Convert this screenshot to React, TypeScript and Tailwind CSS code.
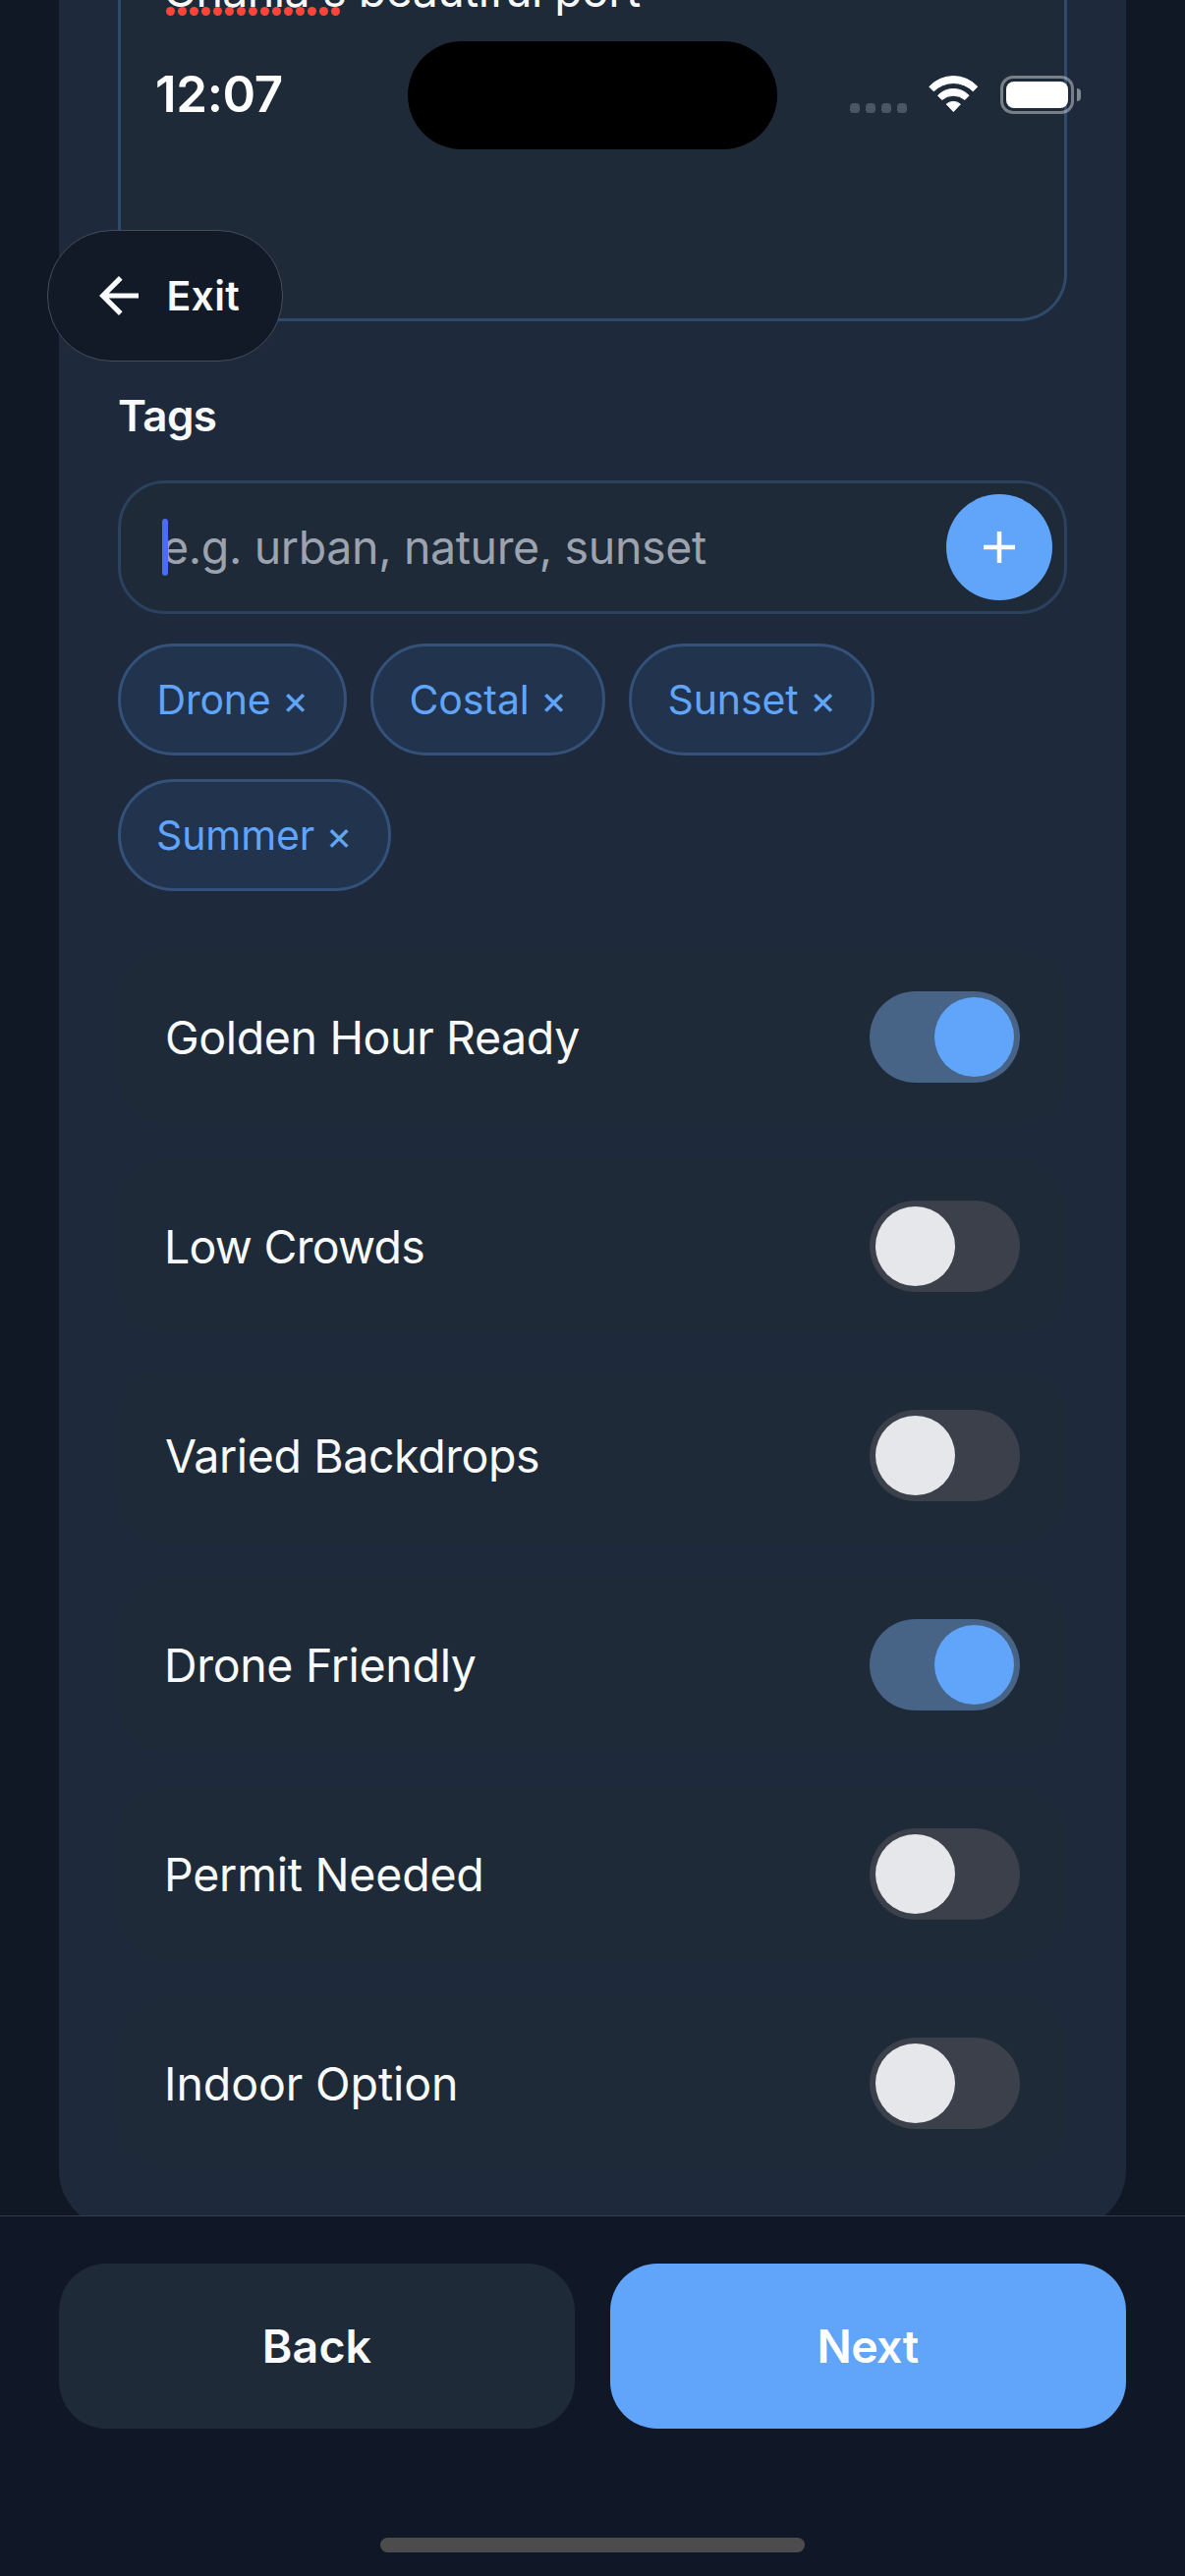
const tags = [
  { label: "Drone", className: "w-[232.5px] pl-[36.5px] tracking-[-0.2px]" },
  { label: "Costal", className: "w-[239px] pl-[37px] tracking-[-0.1px]" },
  { label: "Sunset", className: "w-[250px] pl-[37px] tracking-[-0.1px]" },
  { label: "Summer", className: "w-[278px] pl-[36px] tracking-[-0.1px]" },
];

const options = [
  { label: "Golden Hour Ready", on: true, className: "tracking-[-0.37px]" },
  { label: "Low Crowds", on: false, className: "-ml-px tracking-[-0.75px]" },
  { label: "Varied Backdrops", on: false, className: "tracking-[-0.4px]" },
  { label: "Drone Friendly", on: true, className: "-ml-px tracking-[-0.32px]" },
  { label: "Permit Needed", on: false, className: "-ml-px tracking-[-0.22px]" },
  { label: "Indoor Option", on: false, className: "-ml-px tracking-[-0.1px]" },
];

function Toggle({ on }: { on: boolean }) {
  return (
    <div
      className={`flex h-[93px] w-[153px] items-center rounded-full px-[6px] ${
        on ? "justify-end bg-[#476386]" : "justify-start bg-[#3b404a]"
      }`}
    >
      <div className={`size-[81px] rounded-full ${on ? "bg-[#60a5fa]" : "bg-[#e5e7eb]"}`} />
    </div>
  );
}

function StatusBar() {
  return (
    <div className="absolute inset-x-0 top-0 h-[192px]">
      <div className="flex h-full items-center justify-between pr-[106px] pl-[158px]">
        <span className="text-[51px] leading-[60px] font-semibold tracking-[-0.35px] text-white">12:07</span>
        <div className="flex h-[39px] items-center">
          <div className="mt-[27px] flex gap-[6px]">
            {[0, 1, 2, 3].map((i) => (
              <span key={i} className="size-[10px] rounded-[3.5px] bg-[#4b5663]" />
            ))}
          </div>
          <svg className="ml-[22px] h-[38px] w-[51px]" viewBox="0 0 51 38" fill="#fff" stroke="#fff" strokeWidth="1" strokeLinejoin="round">
            <path d="M.8 11.3A33.3 33.3 0 0 1 49.8 11.3L45.3 15.8A28.3 28.3 0 0 0 5.3 15.8Z" />
            <path d="M9.5 20.2A21.8 21.8 0 0 1 41.1 20.2L36.9 24.5A17.8 17.8 0 0 0 13.7 24.5Z" />
            <path d="M18.2 29A11 11 0 0 1 32.4 29L25.3 36.6Z" />
          </svg>
          <div className="ml-[22px] h-[39px] w-[75px] rounded-[13px] border-[3px] border-white/40 p-[3px]">
            <div className="h-full w-full rounded-[8px] bg-white" />
          </div>
          <div className="ml-[3px] h-[13px] w-[4px] rounded-r-full bg-white/45" />
        </div>
      </div>
      <div className="absolute top-[42px] left-[415px] h-[110px] w-[376px] rounded-full bg-black" />
    </div>
  );
}

function ExitButton() {
  return (
    <button className="absolute top-[234px] left-[48px] flex h-[134px] w-[240px] items-center rounded-[66px] border border-[#454d5a] bg-[#121a27] pl-[52px]">
      <svg className="size-[40px]" viewBox="0 0 40 40" fill="none" stroke="#f8fafc" strokeWidth="5.2">
        <path d="M21.8 1.9L3.7 20L21.8 38.1M4 20H40" />
      </svg>
      <span className="ml-[28.5px] text-[41px] leading-[48px] font-semibold tracking-[0.3px] text-[#f8fafc]">Exit</span>
    </button>
  );
}

export default function App() {
  return (
    <div className="relative h-[2622px] w-[1206px] overflow-hidden bg-[#101725] font-['Inter',sans-serif]">
      <main className="h-[2255px] overflow-hidden px-[60px]">
        <section className="rounded-b-[60px] bg-[#1e293b] px-[60px] pb-[60px]">
          <div className="relative h-[327px] overflow-hidden rounded-b-[48px] border-[3px] border-t-0 border-[#304a6b] bg-[#1e2a37]">
            <p className="absolute top-[-38px] left-[43px] text-[46.5px] leading-[56px] tracking-[-0.58px] whitespace-nowrap text-[#f8fafc]">
              Chania's beautiful port
            </p>
            <div className="absolute top-[7px] left-[45.5px] flex gap-[3px]">
              {Array.from({ length: 15 }, (_, i) => (
                <span key={i} className="size-[9px] rounded-full bg-[#ff453a]" />
              ))}
            </div>
          </div>

          <h2 className="mt-[66px] mb-[36px] text-[44px] leading-[60px] font-semibold tracking-[-0.6px] text-[#f8fafc]">
            Tags
          </h2>

          <div className="flex h-[136px] items-center justify-between rounded-[48px] border-[3px] border-[#2b415e] bg-[#1e2a37] pr-[12px] pl-[42px]">
            <div className="relative">
              <span className="text-[46.5px] leading-[56px] tracking-[-0.36px] text-[#9ca3af]">e.g. urban, nature, sunset</span>
              <span className="absolute top-[-1px] left-0 h-[58px] w-[6px] rounded-full bg-[#4a6cf7]" />
            </div>
            <button className="flex size-[108px] items-center justify-center rounded-full bg-[#60a5fa]">
              <svg className="size-[32px]" viewBox="0 0 32 32" stroke="#fff" strokeWidth="4.5">
                <path d="M16 0V32M0 16H32" />
              </svg>
            </button>
          </div>

          <div className="mt-[30px] flex flex-wrap gap-[24px]">
            {tags.map((tag) => (
              <button
                key={tag.label}
                className={`flex h-[114px] items-center rounded-full border-[3px] border-[#34517a] bg-[#22344d] text-[41px] leading-[48px] whitespace-nowrap text-[#60a5fa] ${tag.className}`}
              >
                {tag.label} ×
              </button>
            ))}
          </div>

          <div className="mt-[60px] flex flex-col gap-[36px]">
            {options.map((option) => (
              <div key={option.label} className="flex h-[177px] items-center justify-between rounded-[48px] bg-[#1e2a37] px-[48px]">
                <span className={`text-[46.5px] leading-[56px] text-[#f8fafc] ${option.className}`}>{option.label}</span>
                <Toggle on={option.on} />
              </div>
            ))}
          </div>
        </section>
      </main>

      <footer className="flex h-[367px] flex-col items-center border-t border-[#343d4b] bg-[#101726] px-[60px] pt-[48px]">
        <div className="grid w-full grid-cols-2 gap-[36px] text-[46.5px] font-semibold">
          <button className="h-[168px] rounded-[48px] bg-[#1e2a37] pt-[2px] tracking-[0.1px] text-[#f8fafc]">Back</button>
          <button className="h-[168px] rounded-[48px] bg-[#60a5fa] pt-[2px] pr-[1px] tracking-[-0.6px] text-white">Next</button>
        </div>
        <div className="mt-[111px] h-[15px] w-[432px] rounded-full bg-[#4c4c4c]" />
      </footer>

      <ExitButton />
      <StatusBar />
    </div>
  );
}
